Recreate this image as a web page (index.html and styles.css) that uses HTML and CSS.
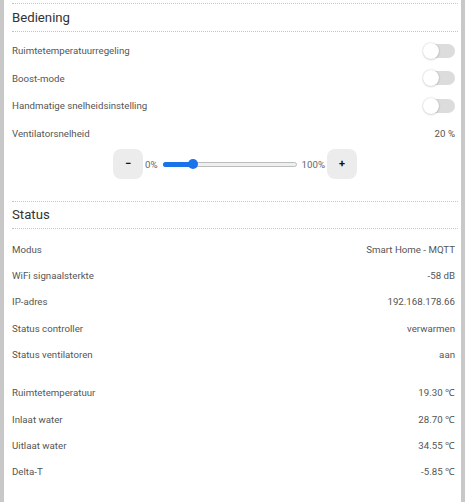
FILE: index.html
```html
<!DOCTYPE html>
<html lang="nl">
<head>
<meta charset="utf-8">
<title>Bediening</title>
<link rel="stylesheet" href="styles.css">
</head>
<body>
<div class="page">
  <div class="divider"></div>
  <section class="section">
    <h2 class="section-title">Bediening</h2>
    <div class="rows rows-control">
      <div class="row"><span class="label">Ruimtetemperatuurregeling</span><span class="toggle"><span class="knob"></span></span></div>
      <div class="row"><span class="label">Boost-mode</span><span class="toggle"><span class="knob"></span></span></div>
      <div class="row"><span class="label">Handmatige snelheidsinstelling</span><span class="toggle"><span class="knob"></span></span></div>
      <div class="row"><span class="label">Ventilatorsnelheid</span><span class="value">20 %</span></div>
    </div>
    <div class="slider-row">
      <button class="step-btn">&minus;</button>
      <span class="range-label">0%</span>
      <div class="track">
        <div class="fill" style="width: 22%"></div>
        <div class="thumb" style="left: 22%"></div>
      </div>
      <span class="range-label">100%</span>
      <button class="step-btn">+</button>
    </div>
  </section>
  <section class="section section-status">
    <h2 class="section-title">Status</h2>
    <div class="rows rows-status">
      <div class="row"><span class="label">Modus</span><span class="value">Smart Home - MQTT</span></div>
      <div class="row"><span class="label">WiFi signaalsterkte</span><span class="value">-58 dB</span></div>
      <div class="row"><span class="label">IP-adres</span><span class="value">192.168.178.66</span></div>
      <div class="row"><span class="label">Status controller</span><span class="value">verwarmen</span></div>
      <div class="row"><span class="label">Status ventilatoren</span><span class="value">aan</span></div>
    </div>
    <div class="rows rows-temps">
      <div class="row"><span class="label">Ruimtetemperatuur</span><span class="value">19.30 ℃</span></div>
      <div class="row"><span class="label">Inlaat water</span><span class="value">28.70 ℃</span></div>
      <div class="row"><span class="label">Uitlaat water</span><span class="value">34.55 ℃</span></div>
      <div class="row"><span class="label">Delta-T</span><span class="value">-5.85 ℃</span></div>
    </div>
  </section>
</div>
</body>
</html>
```

FILE: styles.css
```css
html, body {
  margin: 0;
  padding: 0;
  height: 100%;
}

body {
  font-family: Roboto, "Liberation Sans", sans-serif;
  color: #555;
  background: #fff;
}

.page {
  box-sizing: border-box;
  min-height: 100%;
  border-left: 4px solid #c8c8c8;
  border-right: 4px solid #c8c8c8;
  padding: 3px 3px 0 8px;
  background: #fff;
}

.divider {
  border-top: 1px dotted #c4c4c4;
}

.section-title {
  margin: 0;
  height: 27px;
  line-height: 27px;
  font-size: 13.2px;
  font-weight: 400;
  color: #333;
  border-bottom: 1px dotted #c4c4c4;
}

.section-status .section-title {
  border-top: 1px dotted #c4c4c4;
  height: 26px;
  line-height: 26px;
}

.rows {
  display: flex;
  flex-direction: column;
  padding-right: 3px;
}

.rows-control {
  padding-top: 5px;
}

.rows-control .row {
  height: 27.5px;
}

.rows-status {
  padding-top: 7px;
}

.rows-temps {
  padding-top: 12.3px;
}

.rows-status .row,
.rows-temps .row {
  height: 26.3px;
}

.row {
  display: flex;
  align-items: center;
  justify-content: space-between;
  font-size: 9.7px;
}

.label {
  color: #555;
}

.value {
  color: #555;
}

.toggle {
  position: relative;
  display: block;
  width: 32px;
  height: 16px;
}

.toggle::before {
  content: "";
  position: absolute;
  left: 3px;
  right: 0;
  top: 1px;
  height: 14px;
  border-radius: 7px;
  background: #dcdcdc;
}

.knob {
  position: absolute;
  left: 0;
  top: 0;
  width: 16px;
  height: 16px;
  border-radius: 50%;
  background: #fff;
  box-shadow: 0 0 2px rgba(0, 0, 0, 0.22), 0 1px 2px rgba(0, 0, 0, 0.1);
}

.slider-row {
  display: flex;
  align-items: center;
  justify-content: center;
  padding-top: 2px;
  height: 30px;
  margin-bottom: 22px;
}

.step-btn {
  width: 30px;
  height: 30px;
  border: none;
  border-radius: 8px;
  background: #ececec;
  color: #111;
  font-family: Roboto, "Liberation Sans", sans-serif;
  font-size: 11px;
  font-weight: 700;
  padding: 0;
  line-height: 30px;
}

.range-label {
  font-size: 9.7px;
  color: #666;
  margin: 0 2px;
}

.track {
  position: relative;
  box-sizing: border-box;
  width: 134px;
  height: 5px;
  margin: 0 3px;
  border: 1px solid #bdbdbd;
  border-radius: 3px;
  background: #efefef;
}

.fill {
  position: absolute;
  left: -1px;
  top: -1px;
  height: 5px;
  border-radius: 3px 0 0 3px;
  background: #1a73e8;
}

.thumb {
  position: absolute;
  top: -3.5px;
  width: 10px;
  height: 10px;
  margin-left: -5px;
  border-radius: 50%;
  background: #1a73e8;
}
```
